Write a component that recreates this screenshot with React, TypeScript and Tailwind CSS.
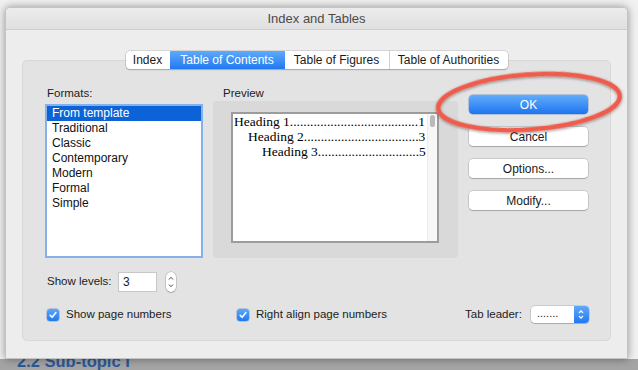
import clsx from "clsx";

const tabs = [
  { label: "Index", width: "w-[44px]", active: false },
  { label: "Table of Contents", width: "w-[115px]", active: true },
  { label: "Table of Figures", width: "w-[104px]", active: false },
  { label: "Table of Authorities", width: "w-[119px]", active: false },
];

const formats = ["From template", "Traditional", "Classic", "Contemporary", "Modern", "Formal", "Simple"];

const headings = [
  { label: "Heading 1", page: "1", indent: "pl-[1px]", dots: 38 },
  { label: "Heading 2", page: "3", indent: "pl-[15px]", dots: 34 },
  { label: "Heading 3", page: "5", indent: "pl-[29px]", dots: 30 },
];

function Checkbox() {
  return (
    <div className="flex h-[12px] w-[12px] items-center justify-center rounded-[3px] bg-gradient-to-b from-[#5aa8fb] to-[#1d78f0] shadow-[0_0_0_0.5px_rgba(0,60,160,0.4)]">
      <svg width="10" height="10" viewBox="0 0 10 10">
        <path d="M2.2 5.3 L4.1 7.3 L7.9 2.6" fill="none" stroke="white" strokeWidth="1.6" strokeLinecap="round" strokeLinejoin="round" />
      </svg>
    </div>
  );
}

function PushButton({ label, primary }: { label: string; primary?: boolean }) {
  return (
    <div
      className={clsx(
        "flex h-[19px] w-[119px] items-center justify-center rounded-[4px] text-[12px]",
        primary
          ? "bg-gradient-to-b from-[#62acfb] to-[#1c74ef] text-white shadow-[0_0_0_0.5px_rgba(0,70,170,0.45)]"
          : "bg-white text-[#1a1a1a] shadow-[0_0_0_0.5px_rgba(0,0,0,0.22),0_1px_1px_rgba(0,0,0,0.18)]",
      )}
    >
      {label}
    </div>
  );
}

function Window() {
  return (
    <div className="relative z-10 flex h-[352px] w-[623px] flex-col overflow-hidden rounded-t-[5px] border border-[#c4c4c4] bg-[#ededed] shadow-[0_0_9px_rgba(0,0,0,0.4)]">
      {/* title bar */}
      <div className="flex h-[22px] shrink-0 items-center justify-center border-b border-[#cdcdcd] bg-gradient-to-b from-[#ececec] to-[#e0e0e0] text-[13px] text-[#4b4b4b]">
        Index and Tables
      </div>

      <div className="flex flex-col px-[16px] pt-[21px]">
        {/* segmented tabs */}
        <div className="relative z-10 flex justify-center">
          <div className="flex h-[18px] overflow-hidden rounded-[4px] bg-white shadow-[0_0_0_0.5px_rgba(0,0,0,0.2),0_1px_1.5px_rgba(0,0,0,0.2)]">
            {tabs.map((t, i) => (
              <div
                key={t.label}
                className={clsx(
                  "flex items-center justify-center text-[12px]",
                  t.width,
                  i > 0 && !t.active && !tabs[i - 1].active && "border-l border-[#d2d2d2]",
                  t.active ? "bg-gradient-to-b from-[#5ea9fb] to-[#1f79f1] text-white" : "text-[#1a1a1a]",
                )}
              >
                {t.label}
              </div>
            ))}
          </div>
        </div>

        {/* panel */}
        <div className="-mt-[9px] flex h-[281px] flex-col rounded-[5px] border border-[#d8d8d8] bg-[#e3e3e3] pl-[22px] pt-[25px]">
          <div className="flex h-[172px]">
            {/* formats */}
            <div className="flex w-[158px] flex-col">
              <div className="h-[14px] pl-[2px] leading-[14px]">Formats:</div>
              <div className="mt-[4px] flex h-[154px] flex-col border-2 border-[#86b0eb] bg-white">
                {formats.map((f, i) => (
                  <div
                    key={f}
                    className={clsx(
                      "h-[15px] pl-[5px] text-[12px] leading-[15px]",
                      i === 0 ? "bg-[#0c63d8] text-white" : "text-[#111]",
                    )}
                  >
                    {f}
                  </div>
                ))}
              </div>
            </div>

            {/* preview */}
            <div className="ml-[10px] flex w-[245px] flex-col">
              <div className="h-[14px] pl-[10px] leading-[14px]">Preview</div>
              <div className="mt-[1px] h-[157px] rounded-[4px] bg-[#d9d9d9] pl-[18px] pt-[11px]">
                <div className="flex h-[131px] w-[208px] border-2 border-[#9c9c9c] bg-white">
                  <div className="flex min-w-0 flex-1 flex-col pr-[2px] font-['Liberation_Serif','Times_New_Roman',serif] text-[13.5px] leading-[15px] text-black">
                    {headings.map((h) => (
                      <div key={h.label} className={clsx("flex h-[15px] justify-between whitespace-nowrap", h.indent)}>
                        <span>
                          {h.label}
                          {".".repeat(h.dots)}
                        </span>
                        <span>{h.page}</span>
                      </div>
                    ))}
                  </div>
                  <div className="flex w-[10px] justify-center border-l border-[#ececec] bg-[#f7f7f7] pt-[1px]">
                    <div className="h-[12px] w-[5px] rounded-full bg-[#b9b9b9]" />
                  </div>
                </div>
              </div>
            </div>

            {/* buttons */}
            <div className="ml-[11px] flex flex-col gap-[13px] pt-[9px]">
              <PushButton label="OK" primary />
              <PushButton label="Cancel" />
              <PushButton label="Options..." />
              <PushButton label="Modify..." />
            </div>
          </div>

          {/* show levels */}
          <div className="mt-[14px] flex h-[20px] items-center">
            <div className="w-[73px] pl-[2px]">Show levels:</div>
            <div className="flex h-[20px] w-[39px] items-center border border-[#c8c8c8] bg-white pl-[4px] text-[12px]">3</div>
            <div className="ml-[9px] flex h-[20px] w-[10px] flex-col items-center justify-center rounded-full bg-white shadow-[0_0_0_0.5px_rgba(0,0,0,0.25),0_1px_1px_rgba(0,0,0,0.15)]">
              <svg width="8" height="16" viewBox="0 0 8 16">
                <path d="M2 5.5 L4 3.3 L6 5.5" fill="none" stroke="#4a4a4a" strokeWidth="1" />
                <path d="M2 10.5 L4 12.7 L6 10.5" fill="none" stroke="#4a4a4a" strokeWidth="1" />
              </svg>
            </div>
          </div>

          {/* checkbox row */}
          <div className="mt-[14px] flex h-[17px] items-center">
            <div className="flex w-[192px] items-center pl-[2px]">
              <Checkbox />
              <span className="ml-[7px]">Show page numbers</span>
            </div>
            <div className="flex w-[228px] items-center">
              <Checkbox />
              <span className="ml-[7px]">Right align page numbers</span>
            </div>
            <div className="flex items-center">
              <span>Tab leader:</span>
              <div className="ml-[9px] flex h-[17px] w-[58px] overflow-hidden rounded-[4px] bg-white shadow-[0_0_0_0.5px_rgba(0,0,0,0.22),0_1px_1px_rgba(0,0,0,0.15)]">
                <div className="flex-1 pl-[6px] text-[11px] leading-[14px]">.......</div>
                <div className="flex w-[15px] items-center justify-center bg-gradient-to-b from-[#5ea9fb] to-[#1f79f1]">
                  <svg width="8" height="13" viewBox="0 0 8 13">
                    <path d="M2 5 L4 2.8 L6 5" fill="none" stroke="white" strokeWidth="1.2" />
                    <path d="M2 8 L4 10.2 L6 8" fill="none" stroke="white" strokeWidth="1.2" />
                  </svg>
                </div>
              </div>
            </div>
          </div>
        </div>
      </div>
    </div>
  );
}

export default function App() {
  return (
    <div className="relative flex h-[370px] w-[638px] flex-col overflow-hidden bg-[#f1f1f1] font-['Liberation_Sans',Arial,sans-serif] text-[11.5px] text-[#1c1c1c]">
      <div className="pl-[5px] pt-[7px]">
        <Window />
      </div>

      {/* document behind the sheet */}
      <div className="h-[11px] overflow-hidden bg-[#a4a4a4] pl-[17px]">
        <div className="-mt-[8px] text-[16.5px] font-bold leading-[20px] text-[#2d5896]">2.2 Sub-topic I</div>
      </div>

      {/* annotation */}
      <svg className="pointer-events-none absolute inset-0 z-20" width="638" height="370" viewBox="0 0 638 370">
        <defs>
          <filter id="sh" x="-20%" y="-50%" width="140%" height="200%">
            <feDropShadow dx="0" dy="1" stdDeviation="1.5" floodColor="#000" floodOpacity="0.45" />
          </filter>
        </defs>
        <ellipse
          cx="529"
          cy="102"
          rx="91"
          ry="27.5"
          transform="rotate(-4 529 102)"
          fill="none"
          stroke="#ef5b4b"
          strokeWidth="4.5"
          filter="url(#sh)"
        />
      </svg>
    </div>
  );
}
